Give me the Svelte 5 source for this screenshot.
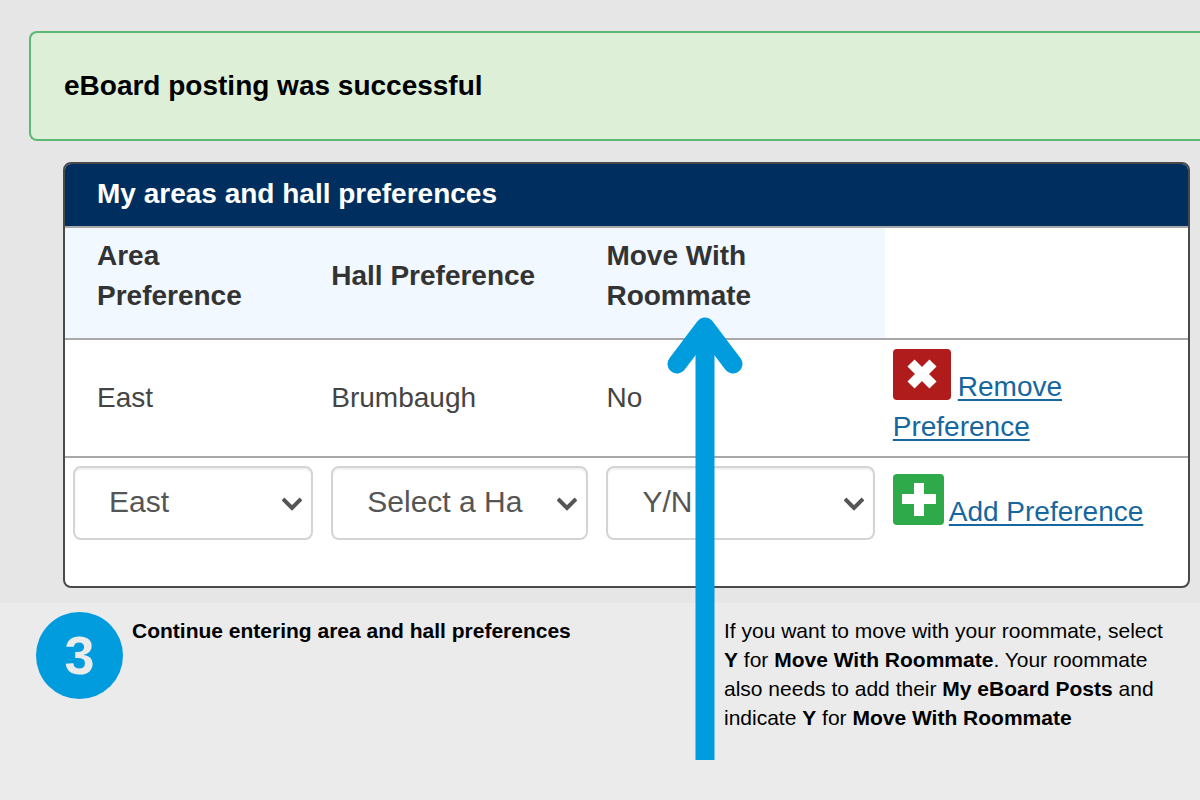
<script>
  let area = "East";
  let hall = "";
  let withRoommate = "";

  let preferences = [{ area: "East", hall: "Brumbaugh", move: "No" }];

  function addPreference() {
    if (!hall || !withRoommate) return;
    preferences = [...preferences, { area, hall, move: withRoommate }];
  }

  function removePreference(index) {
    preferences = preferences.filter((_, i) => i !== index);
  }
</script>

{#snippet chevron()}
  <svg class="chevron" viewBox="0 0 20 14" aria-hidden="true">
    <path d="M1 2 L10 11 L19 2" fill="none" stroke="#555" stroke-width="4" />
  </svg>
{/snippet}

<main>
  <section class="screen">
    <div class="alert" role="status">eBoard posting was successful</div>

    <div class="card">
      <h2>My areas and hall preferences</h2>
      <table>
        <colgroup>
          <col class="col-area" />
          <col class="col-hall" />
          <col class="col-move" />
          <col />
        </colgroup>
        <thead>
          <tr>
            <th>Area Preference</th>
            <th>Hall Preference</th>
            <th>Move With Roommate</th>
            <td></td>
          </tr>
        </thead>
        <tbody>
          {#each preferences as pref, i}
            <tr class="saved">
              <td>{pref.area}</td>
              <td>{pref.hall}</td>
              <td>{pref.move}</td>
              <td>
                <a href="#remove" on:click|preventDefault={() => removePreference(i)}
                  ><svg class="icon remove" viewBox="0 0 58 51" aria-hidden="true">
                    <rect width="58" height="51" rx="4" fill="#b01c1c" />
                    <path d="M18 14 L40 36 M40 14 L18 36" stroke="#fff" stroke-width="10" />
                  </svg><span>Remove Preference</span></a
                >
              </td>
            </tr>
          {/each}
          <tr class="entry">
            <td>
              <div class="field">
                <select bind:value={area} aria-label="Area preference">
                  <option>East</option>
                  <option>West</option>
                </select>
                {@render chevron()}
              </div>
            </td>
            <td>
              <div class="field">
                <select bind:value={hall} aria-label="Hall preference">
                  <option value="">Select a Hall</option>
                  <option>Brumbaugh</option>
                </select>
                {@render chevron()}
              </div>
            </td>
            <td>
              <div class="field">
                <select bind:value={withRoommate} aria-label="Move with roommate">
                  <option value="">Y/N</option>
                  <option value="Yes">Y</option>
                  <option value="No">N</option>
                </select>
                {@render chevron()}
              </div>
            </td>
            <td>
              <a href="#add" on:click|preventDefault={addPreference}
                ><svg class="icon add" viewBox="0 0 51 51" aria-hidden="true">
                  <rect width="51" height="51" rx="4" fill="#2eaa4a" />
                  <path d="M26 9 V42 M9 25 H43" stroke="#fff" stroke-width="10" />
                </svg><span>Add Preference</span></a
              >
            </td>
          </tr>
        </tbody>
      </table>
    </div>
  </section>

  <section class="steps">
    <div class="step">
      <span class="number">3</span>
      <p><strong>Continue entering area and hall preferences</strong></p>
    </div>
    <div class="note">
      <!-- Arrow from the note up to the Move With Roommate column -->
      <svg class="arrow" viewBox="0 0 76 444" aria-hidden="true">
        <path d="M38 20 V444" stroke="#009cde" stroke-width="19" />
        <path
          d="M10 48 L38 11 L66 48"
          fill="none"
          stroke="#009cde"
          stroke-width="19"
          stroke-linecap="round"
          stroke-linejoin="round"
        />
      </svg>
      <p>
        If you want to move with your roommate, select <strong>Y</strong> for
        <strong>Move With Roommate</strong>. Your roommate also needs to add
        their <strong>My eBoard Posts</strong> and indicate <strong>Y</strong>
        for <strong>Move With Roommate</strong>
      </p>
    </div>
  </section>
</main>

<style>
  :global(body) {
    margin: 0;
    background: #ebebeb;
  }

  main {
    font-family: "Liberation Sans", Arial, sans-serif;
    font-size: 28px;
    line-height: 40px;
    color: #444;
    overflow-x: hidden;
  }

  .screen {
    padding: 31px 0 15px 29px;
    background: #e6e6e6;
  }

  .alert {
    padding: 33px;
    border: 2px solid #5cb874;
    border-right: none;
    border-radius: 8px 0 0 8px;
    background: #deefd8;
    color: #000;
    font-weight: bold;
  }

  .card {
    margin: 21px 10px 0 34px;
    border: 2px solid #4a4a4a;
    border-radius: 8px;
    background: #fff;
    overflow: hidden;
    padding-bottom: 38px;
  }

  h2 {
    margin: 0;
    padding: 10px 32px 12px;
    background: #002f5f;
    color: #fff;
    font-size: 28px;
    line-height: 40px;
  }

  table {
    width: 100%;
    table-layout: fixed;
    border-collapse: collapse;
  }

  .col-area {
    width: 23%;
  }

  .col-hall {
    width: 24.5%;
  }

  .col-move {
    width: 25.5%;
  }

  tr {
    border-top: 2px solid #a8a8a8;
  }

  th,
  td {
    padding: 8px 10px 8px 8px;
    text-align: left;
  }

  th {
    padding-bottom: 22px;
    background: #f1f8ff;
    color: #333;
  }

  th:first-child,
  .saved td:first-child {
    padding-left: 32px;
    padding-right: 32px;
  }

  .saved td {
    height: 100px;
  }

  .entry td {
    height: 74px;
  }

  .field {
    position: relative;
  }

  select {
    display: block;
    box-sizing: border-box;
    width: 100%;
    height: 74px;
    padding: 0 63px 4px 34px;
    border: 2px solid #d4d4d4;
    border-radius: 8px;
    background: #fff;
    box-shadow: inset 0 2px 2px rgba(0, 0, 0, 0.06);
    color: #555;
    font-family: inherit;
    font-size: 30px;
    appearance: none;
  }

  .chevron {
    position: absolute;
    top: 31px;
    right: 11px;
    width: 20px;
    height: 14px;
    pointer-events: none;
  }

  a {
    color: #1666a0;
    text-decoration: none;
  }

  a span {
    text-decoration: underline;
    text-decoration-thickness: 2px;
    text-underline-offset: 3px;
  }

  .icon {
    height: 51px;
    vertical-align: -4px;
  }

  .remove {
    width: 58px;
    margin-right: 7px;
  }

  .add {
    width: 51px;
    margin-right: 5px;
  }

  .steps {
    display: grid;
    grid-template-columns: 724fr 476fr;
    padding-top: 9px;
    color: #000;
    font-size: 21px;
    line-height: 29px;
  }

  .steps p {
    margin: 4px 0 0;
  }

  .step {
    display: flex;
    gap: 9px;
    padding-left: 36px;
  }

  .number {
    display: grid;
    place-items: center;
    width: 87px;
    height: 87px;
    border-radius: 50%;
    background: #009cde;
    color: #ebebeb;
    font-size: 54px;
    font-weight: bold;
  }

  .note {
    position: relative;
    padding: 0 24px 28px 0;
  }

  .arrow {
    position: absolute;
    bottom: 0;
    left: -57px;
    width: 76px;
    height: 444px;
  }
</style>
